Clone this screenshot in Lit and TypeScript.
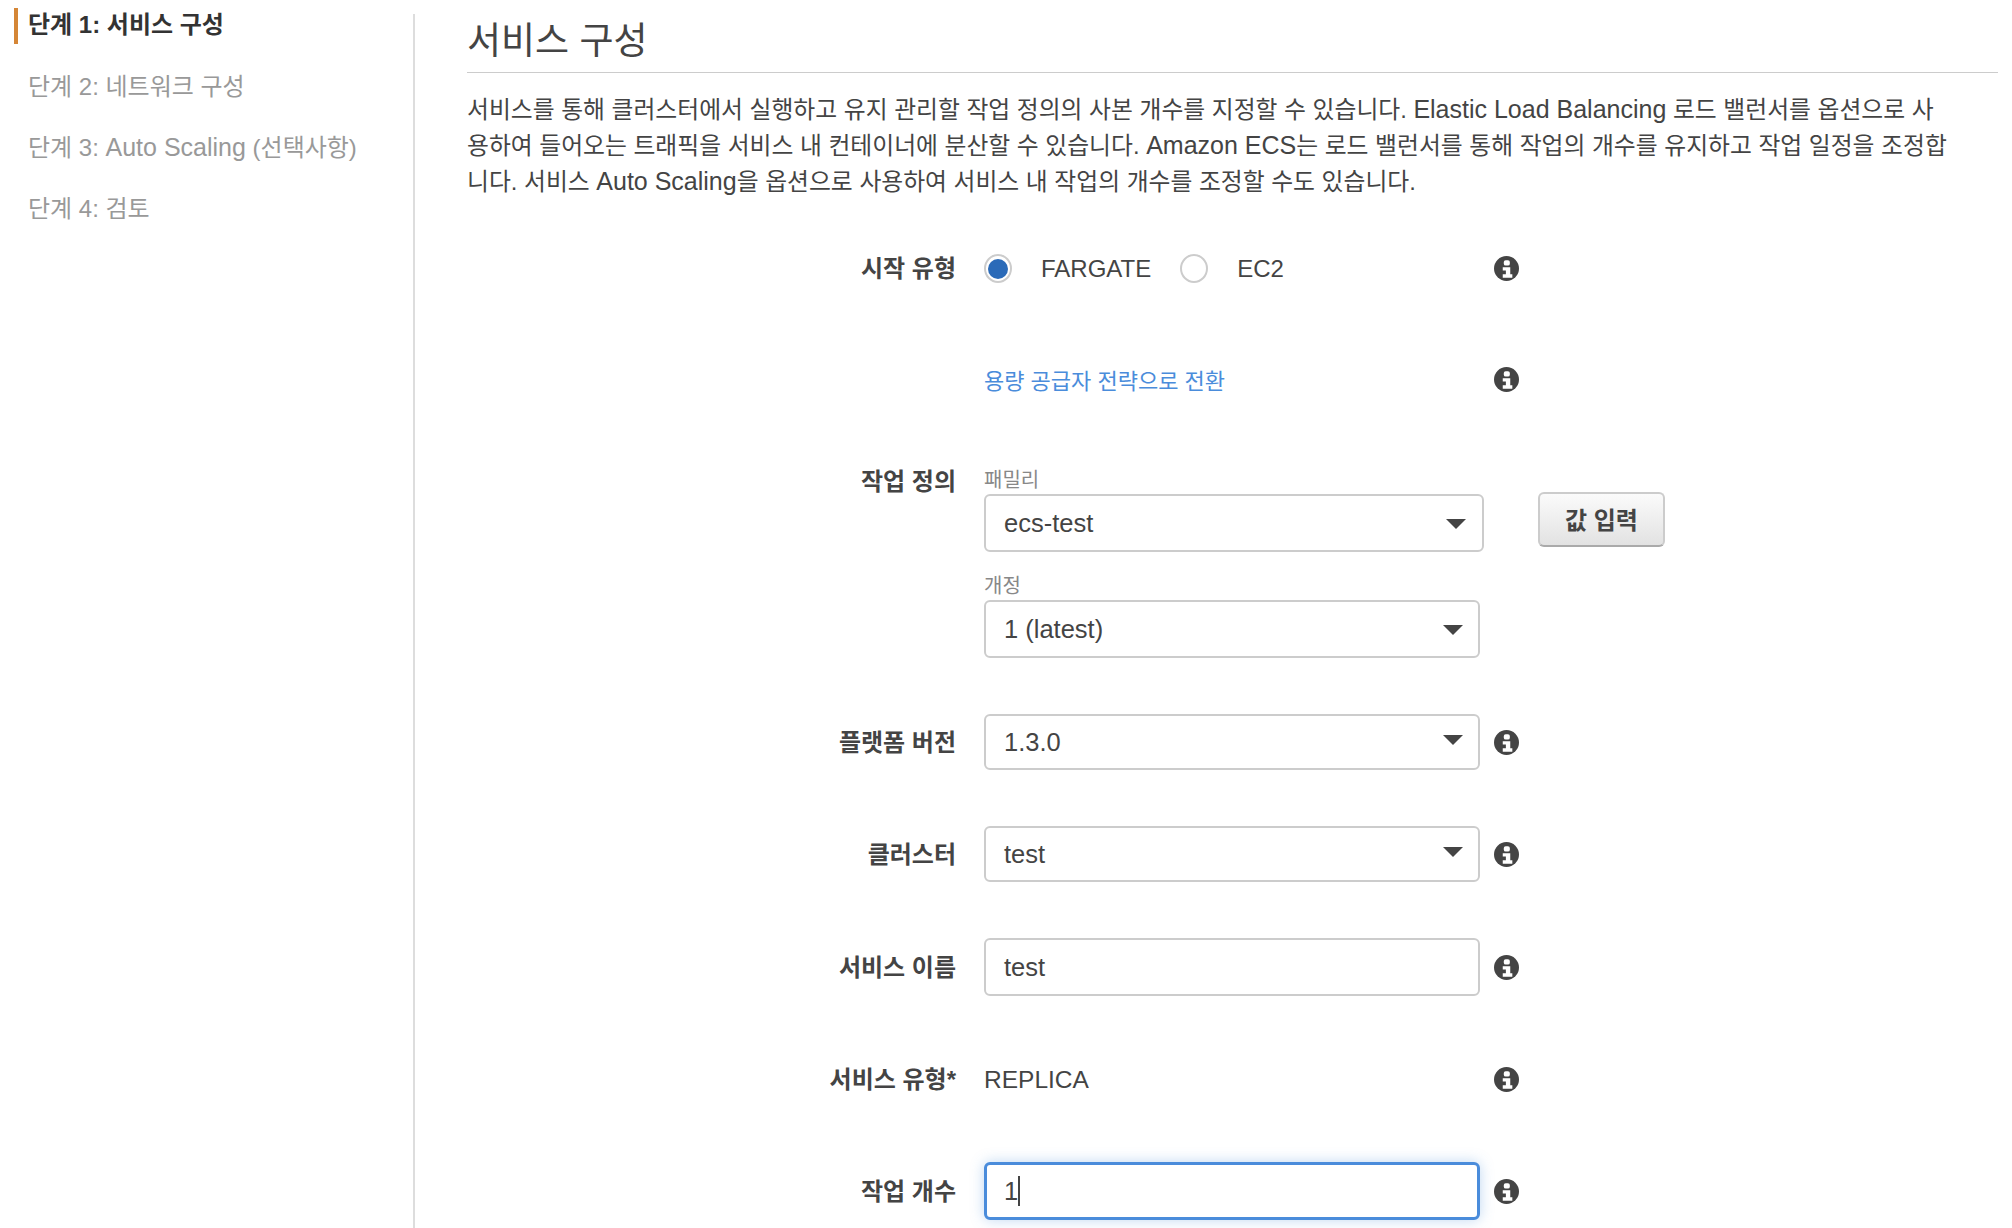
import { LitElement, html, css } from "lit";
import { customElement } from "lit/decorators.js";

const info = html`<svg class="info" viewBox="0 0 24 24" aria-hidden="true">
  <circle cx="12" cy="12" r="12" fill="#444"></circle>
  <rect x="9.4" y="4" width="5.8" height="5.2" rx="1.8" fill="#fff"></rect>
  <path d="M8.4 10.8h7.2v6.7h2v3.3H8.4v-3.3h3v-3.5h-3z" fill="#fff"></path>
</svg>`;

@customElement("app-root")
export class AppRoot extends LitElement {
  static styles = css`
    :host {
      display: block;
      width: 2012px;
      height: 1228px;
      overflow: hidden;
      background: #fff;
      color: #444;
      font-family: "Liberation Sans", "Noto Sans CJK KR", sans-serif;
      font-size: 24px;
    }
    .page { display: flex; height: 1228px; padding-top: 8px; box-sizing: border-box; }
    .side { width: 413px; flex: none; padding-left: 14px; box-sizing: border-box; }
    .step { height: 36px; line-height: 33px; margin-bottom: 25px; padding-left: 14px; color: #999; white-space: nowrap; }
    .step.on { border-left: 4px solid #d58636; padding-left: 10px; color: #333; font-weight: 700; margin-bottom: 26px; }
    .lat { font-size: 25px; line-height: 1; }
    .main { flex: 1; display: flex; margin-top: 6px; border-left: 2px solid #ddd; padding-left: 52px; padding-right: 14px; min-width: 0; }
    .content { flex: 1; min-width: 0; }
    h1 { margin: 0; height: 58px; line-height: 56px; font-size: 37px; font-weight: 400; color: #444; border-bottom: 1px solid #ccc; box-sizing: content-box; }
    .desc { margin: 19px 0 0; line-height: 36px; width: 1485px; font-size: 23.8px; }
    .row { display: grid; grid-template-columns: 489px 496px 1fr; column-gap: 28px; align-items: center; }
    .row .extra { display: flex; align-items: center; margin-left: -14px; }
    .label { text-align: right; font-weight: 700; white-space: nowrap; padding-bottom: 4px; }
    .r-start { height: 30px; margin-top: 49px; }
    .r-link { height: 30px; margin-top: 84px; }
    .r-def { margin-top: 74px; align-items: start; }
    .r-def .label { line-height: 24px; padding-top: 3px; padding-bottom: 0; }
    .r-plat { margin-top: 56px; }
    .r-cluster { margin-top: 56px; }
    .r-name { margin-top: 56px; }
    .r-type { height: 30px; margin-top: 64px; }
    .r-count { margin-top: 72px; }
    .radios { display: flex; align-items: center; }
    .radio { width: 28px; height: 29px; border-radius: 50%; border: 2px solid #ccc; box-sizing: border-box; background: #fff; display: flex; align-items: center; justify-content: center; flex: none; }
    .radio i { width: 20px; height: 20px; border-radius: 50%; background: #2a6ab8; display: block; }
    .radio-text { margin-left: 29px; margin-right: 29px; }
    .link { color: #4a8cdb; white-space: nowrap; font-size: 22px; }
    .sub { font-size: 20px; line-height: 26px; color: #888; margin-bottom: 1px; }
    .field { box-sizing: border-box; height: 56px; border: 2px solid #ccc; border-radius: 6px; background: #fff; padding-left: 18px; display: flex; align-items: center; position: relative; font-size: 25.5px; }
    .tall { height: 58px; }
    .wide { width: 500px; }
    .gap { margin-top: 21px; }
    .arrow { position: absolute; right: 15px; top: 50%; margin-top: -7px; width: 0; height: 0; border-left: 10px solid transparent; border-right: 10px solid transparent; border-top: 10px solid #444; }
    .tall .arrow { margin-top: -4px; }
    .wide .arrow { right: 16px; }
    .focus { border: 3px solid #4a8cdb; padding-left: 17px; box-shadow: 0 0 14px rgba(74, 144, 217, .35); height: 58px; }
    .caret { display: inline-block; width: 2px; height: 30px; background: #444; margin-left: 0; }
    .info { width: 25px; height: 25px; display: block; flex: none; }
    .def-extra { position: relative; }
    .btn { position: absolute; left: 44px; top: 25px; width: 127px; height: 55px; box-sizing: border-box; border: 2px solid #ccc; border-bottom-color: #aaa; border-radius: 6px; background: linear-gradient(#fbfbfb, #e2e2e2); font: 700 24px "Liberation Sans", "Noto Sans CJK KR", sans-serif; color: #444; padding: 0 0 3px; }
    .replica { font-size: 24.5px; }
  `;

  render() {
    return html`<div class="page">
      <nav class="side">
        <div class="step on">단계 1: 서비스 구성</div>
        <div class="step">단계 2: 네트워크 구성</div>
        <div class="step">단계 3: <span class="lat">Auto Scaling</span> (선택사항)</div>
        <div class="step">단계 4: 검토</div>
      </nav>
      <div class="main"><div class="content">
        <h1>서비스 구성</h1>
        <p class="desc">서비스를 통해 클러스터에서 실행하고 유지 관리할 작업 정의의 사본 개수를 지정할 수 있습니다. <span class="lat">Elastic Load Balancing</span> 로드 밸런서를 옵션으로 사용하여 들어오는 트래픽을 서비스 내 컨테이너에 분산할 수 있습니다. <span class="lat">Amazon ECS</span>는 로드 밸런서를 통해 작업의 개수를 유지하고 작업 일정을 조정합니다. 서비스 <span class="lat">Auto Scaling</span>을 옵션으로 사용하여 서비스 내 작업의 개수를 조정할 수도 있습니다.</p>

        <div class="row r-start">
          <div class="label">시작 유형</div>
          <div class="radios">
            <span class="radio"><i></i></span><span class="radio-text">FARGATE</span>
            <span class="radio"></span><span class="radio-text">EC2</span>
          </div>
          <div class="extra">${info}</div>
        </div>
        <div class="row r-link">
          <div></div>
          <div class="link">용량 공급자 전략으로 전환</div>
          <div class="extra">${info}</div>
        </div>
        <div class="row r-def">
          <div class="label">작업 정의</div>
          <div>
            <div class="sub">패밀리</div>
            <div class="field tall wide">ecs-test<span class="arrow"></span></div>
            <div class="sub gap">개정</div>
            <div class="field tall">1 (latest)<span class="arrow"></span></div>
          </div>
          <div class="extra def-extra"><button class="btn">값 입력</button></div>
        </div>
        <div class="row r-plat">
          <div class="label">플랫폼 버전</div>
          <div class="field">1.3.0<span class="arrow"></span></div>
          <div class="extra">${info}</div>
        </div>
        <div class="row r-cluster">
          <div class="label">클러스터</div>
          <div class="field">test<span class="arrow"></span></div>
          <div class="extra">${info}</div>
        </div>
        <div class="row r-name">
          <div class="label">서비스 이름</div>
          <div class="field tall">test</div>
          <div class="extra">${info}</div>
        </div>
        <div class="row r-type">
          <div class="label">서비스 유형*</div>
          <div class="replica">REPLICA</div>
          <div class="extra">${info}</div>
        </div>
        <div class="row r-count">
          <div class="label">작업 개수</div>
          <div class="field focus">1<span class="caret"></span></div>
          <div class="extra">${info}</div>
        </div>
      </div></div>
    </div>`;
  }
}
